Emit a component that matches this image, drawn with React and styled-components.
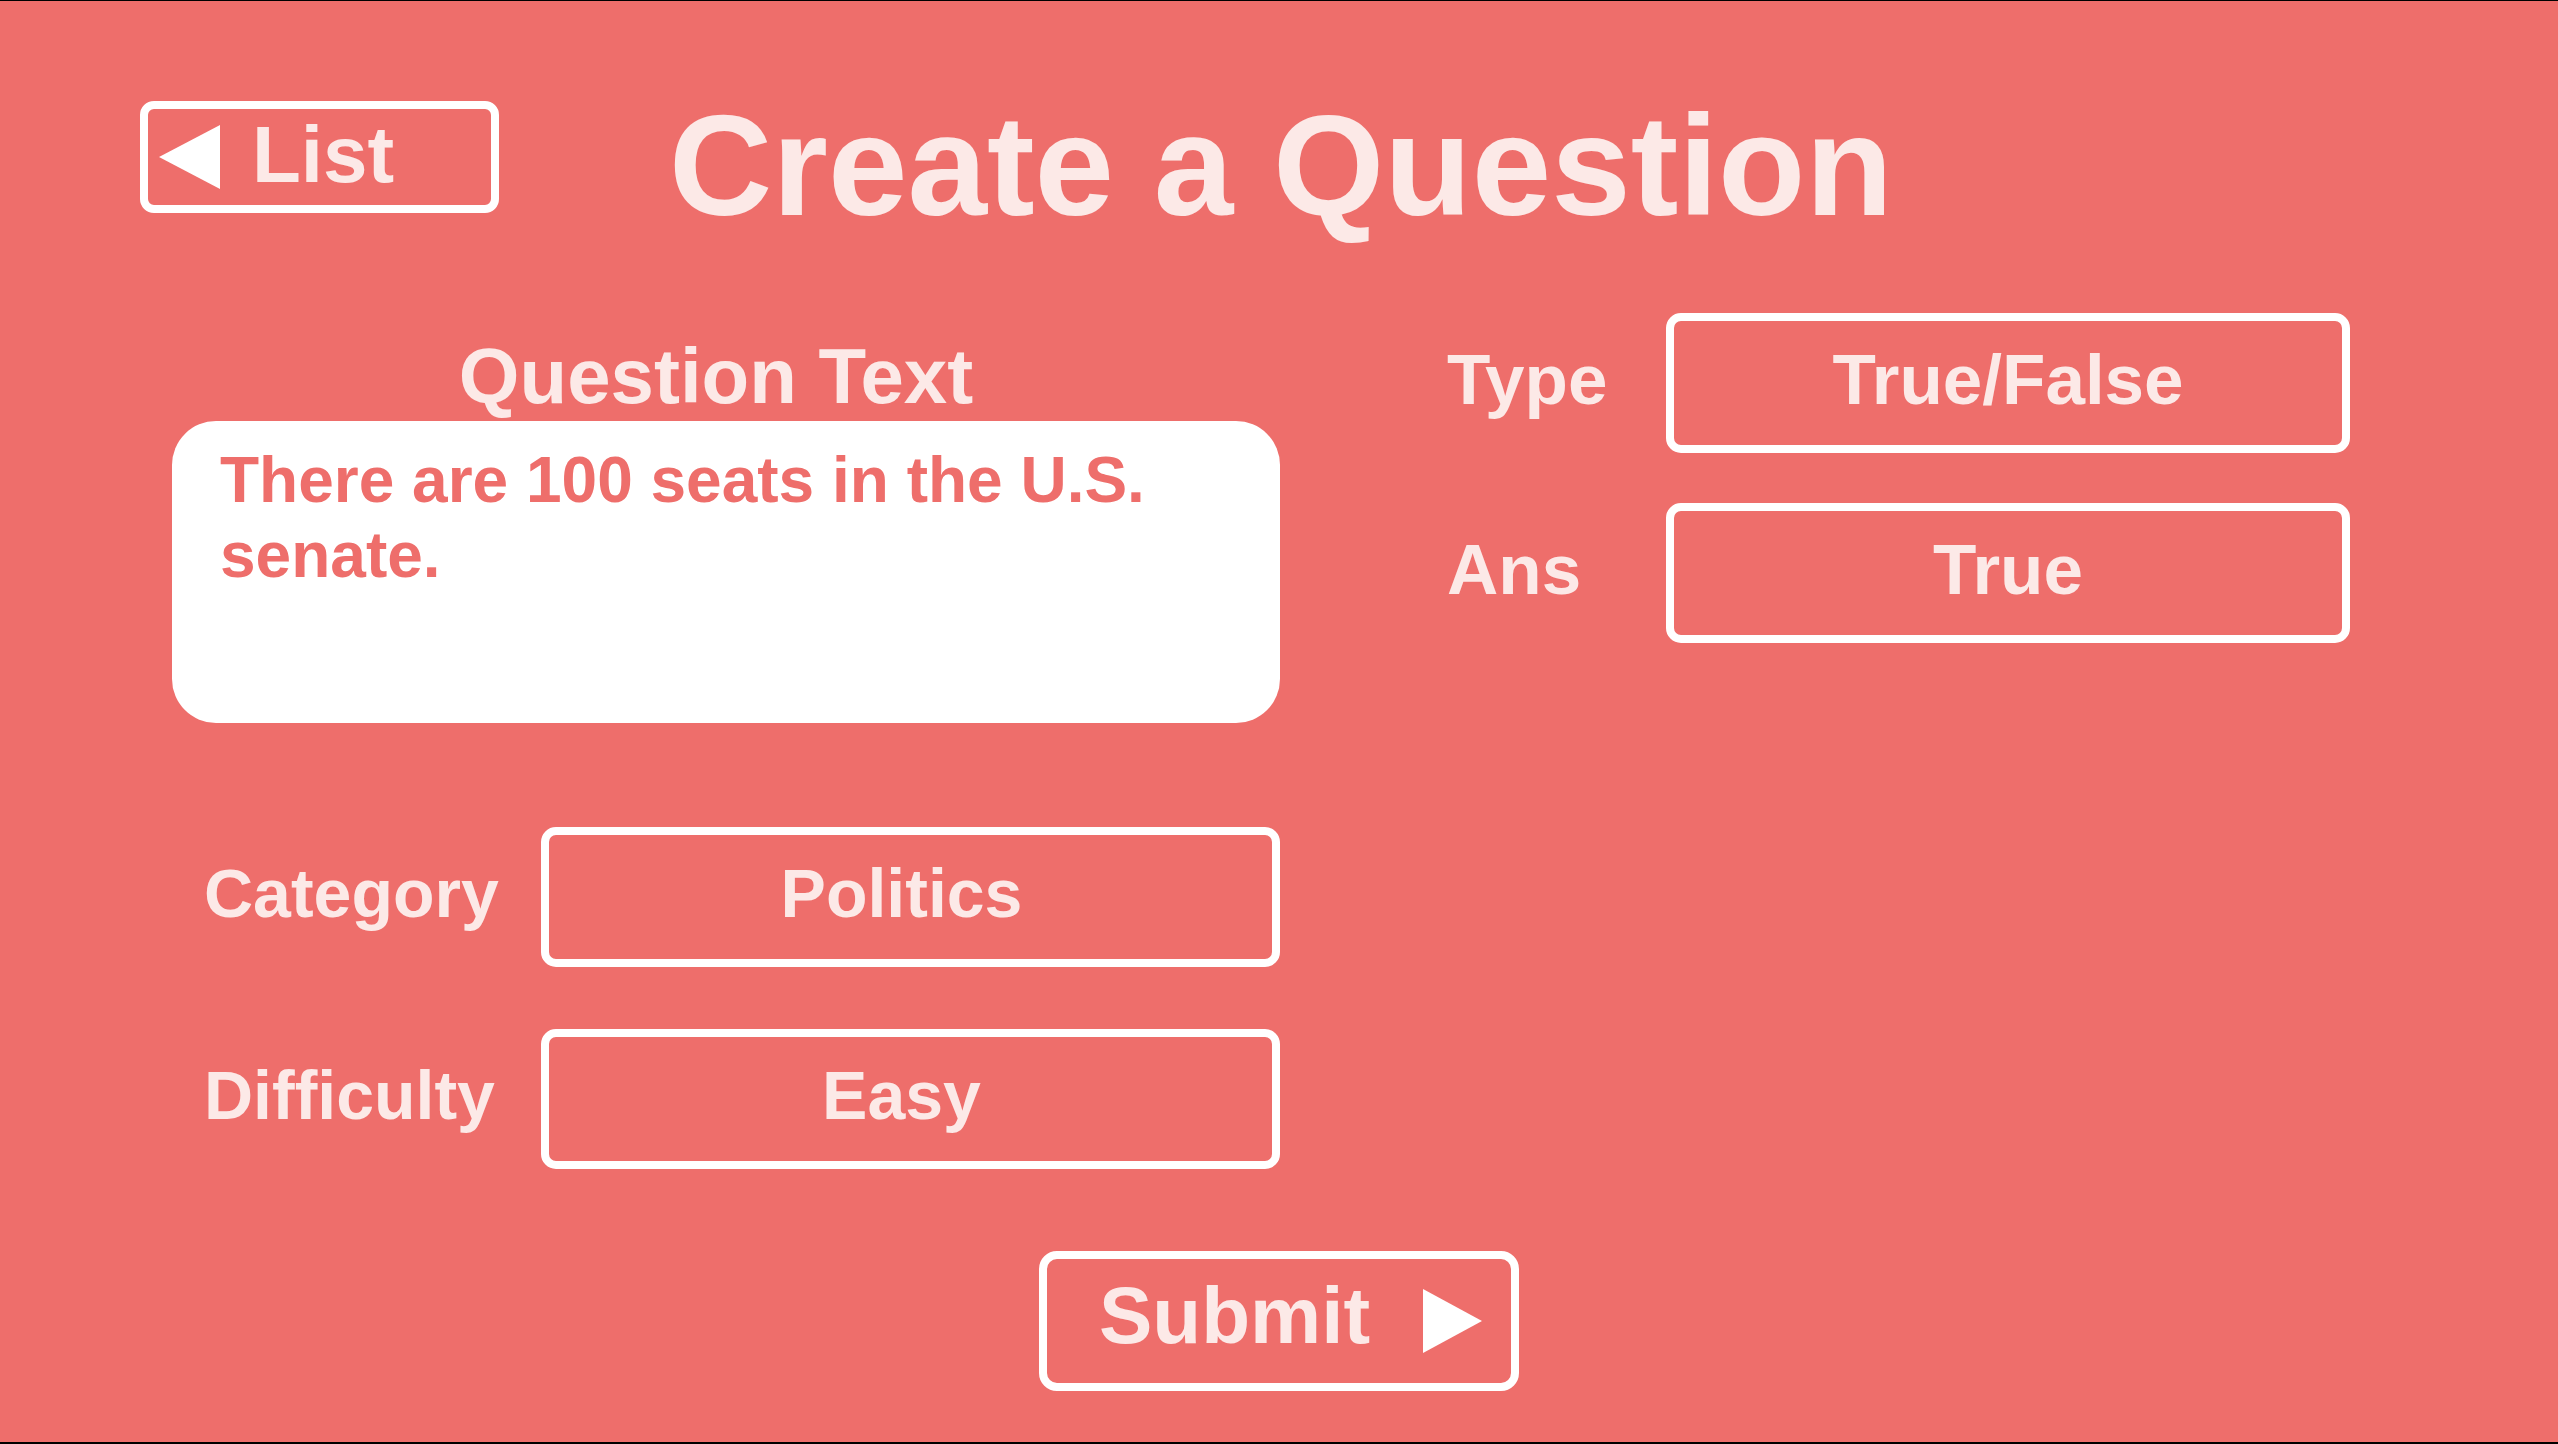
import React from "react";
import styled, { createGlobalStyle } from "styled-components";

const GlobalStyle = createGlobalStyle`
    html,
    body {
        margin: 0;
        padding: 0;
        background: #000000;
    }
    body {
        font-family: "Liberation Sans", Arial, Helvetica, sans-serif;
    }
`;

const CORAL = "#ee6e6b";
const BLUSH = "#fce9e7";

const Arrow = ({ direction = "left", width, height }) => {
    const points =
        direction === "left"
            ? `0,${height / 2} ${width},0 ${width},${height}`
            : `0,0 ${width},${height / 2} 0,${height}`;
    return (
        <svg width={width} height={height} viewBox={`0 0 ${width} ${height}`}>
            <polygon points={points} fill="#ffffff" />
        </svg>
    );
};

const CreateQuestionPage = () => {
    return (
        <SPage>
            <GlobalStyle />
            <SHeader>
                <SBackButton type="button">
                    <Arrow direction="left" width={61} height={64} />
                    <span>List</span>
                </SBackButton>
                <STitle>Create a Question</STitle>
            </SHeader>

            <SMain>
                <SLeftColumn>
                    <SSectionHeading>Question Text</SSectionHeading>
                    <SQuestionBox>There are 100 seats in the U.S. senate.</SQuestionBox>

                    <SFieldRow $gap={104} $indent={32}>
                        <SFieldLabel $size={68}>Category</SFieldLabel>
                        <SValueBox $width={739} $size={68} $shift={18}>
                            Politics
                        </SValueBox>
                    </SFieldRow>
                    <SFieldRow $gap={62} $indent={32}>
                        <SFieldLabel $size={68}>Difficulty</SFieldLabel>
                        <SValueBox $width={739} $size={68} $shift={18}>
                            Easy
                        </SValueBox>
                    </SFieldRow>
                </SLeftColumn>

                <SRightColumn>
                    <SFieldRow $gap={0} $indent={0}>
                        <SFieldLabel $size={71}>Type</SFieldLabel>
                        <SValueBox $width={684} $size={71}>
                            True/False
                        </SValueBox>
                    </SFieldRow>
                    <SFieldRow $gap={50} $indent={0}>
                        <SFieldLabel $size={71}>Ans</SFieldLabel>
                        <SValueBox $width={684} $size={71}>
                            True
                        </SValueBox>
                    </SFieldRow>
                </SRightColumn>
            </SMain>

            <SFooter>
                <SSubmitButton type="button">
                    <span>Submit</span>
                    <Arrow direction="right" width={59} height={64} />
                </SSubmitButton>
            </SFooter>
        </SPage>
    );
};

const SPage = styled.div`
    box-sizing: border-box;
    width: 2558px;
    height: 1444px;
    overflow: hidden;
    border-top: 1px solid #000000;
    border-bottom: 2px solid #000000;
    background-color: ${CORAL};
    color: ${BLUSH};
    font-weight: 700;
    padding-top: 100px;
`;

const SHeader = styled.header`
    display: flex;
    align-items: flex-start;
    padding-left: 140px;
`;

const SBackButton = styled.button`
    box-sizing: border-box;
    display: flex;
    align-items: center;
    gap: 32px;
    width: 359px;
    height: 112px;
    padding: 0 0 4px 11px;
    border: 8px solid #ffffff;
    border-radius: 14px;
    background: transparent;
    color: inherit;
    font-family: inherit;
    font-weight: 700;
    font-size: 80px;
    line-height: 1;
    cursor: pointer;
    svg {
        margin-top: 4px;
        flex-shrink: 0;
    }
`;

const STitle = styled.h1`
    margin: -7px 0 0 170px;
    font-size: 143px;
    line-height: 1;
    font-weight: 700;
    white-space: nowrap;
`;

const SMain = styled.main`
    display: flex;
    align-items: flex-start;
    margin-top: 76px;
`;

const SLeftColumn = styled.section`
    display: flex;
    flex-direction: column;
    width: 1108px;
    margin-left: 172px;
    padding-top: 24px;
`;

const SRightColumn = styled.section`
    display: flex;
    flex-direction: column;
    width: 903px;
    margin-left: 167px;
`;

const SSectionHeading = styled.h2`
    margin: 0;
    padding-right: 20px;
    font-size: 78px;
    line-height: 1;
    font-weight: 700;
    text-align: center;
`;

const SQuestionBox = styled.div`
    box-sizing: border-box;
    height: 302px;
    margin-top: 6px;
    padding: 22px 48px;
    background-color: #ffffff;
    border-radius: 44px;
    color: ${CORAL};
    font-size: 64px;
    line-height: 75px;
`;

const SFieldRow = styled.div`
    display: flex;
    align-items: center;
    height: 140px;
    margin-top: ${(p) => p.$gap}px;
    padding-left: ${(p) => p.$indent}px;
`;

const SFieldLabel = styled.span`
    flex: 1;
    font-size: ${(p) => p.$size}px;
    line-height: 1;
    padding-bottom: 8px;
    white-space: nowrap;
`;

const SValueBox = styled.div`
    box-sizing: border-box;
    display: flex;
    align-items: center;
    justify-content: center;
    width: ${(p) => p.$width}px;
    height: 100%;
    padding: 0 ${(p) => p.$shift || 0}px 8px 0;
    border: 8px solid #ffffff;
    border-radius: 15px;
    font-size: ${(p) => p.$size}px;
    line-height: 1;
`;

const SFooter = styled.footer`
    display: flex;
    justify-content: center;
    margin-top: 82px;
`;

const SSubmitButton = styled.button`
    box-sizing: border-box;
    display: flex;
    align-items: center;
    justify-content: space-between;
    width: 480px;
    height: 140px;
    padding: 0 29px 10px 52px;
    border: 8px solid #ffffff;
    border-radius: 18px;
    background: transparent;
    color: inherit;
    font-family: inherit;
    font-weight: 700;
    font-size: 80px;
    line-height: 1;
    cursor: pointer;
    svg {
        margin-top: 10px;
        flex-shrink: 0;
    }
`;

export default CreateQuestionPage;
